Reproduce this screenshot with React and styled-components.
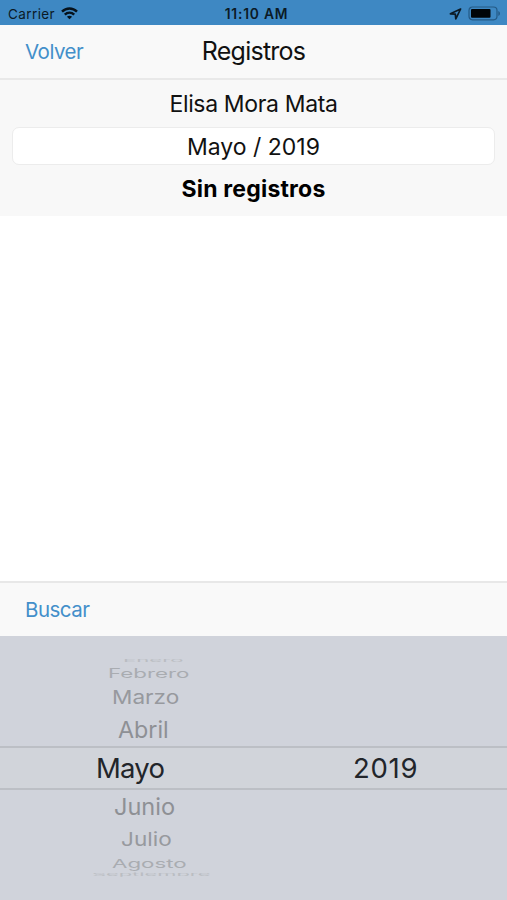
import React from 'react';
import styled, {createGlobalStyle} from 'styled-components';

const GlobalStyle = createGlobalStyle`
    * {
        box-sizing: border-box;
    }
    body {
        margin: 0;
        background-color: #fff;
        font-family: Inter, "Liberation Sans", sans-serif;
    }
`;

const Screen = styled.div`
    display: flex;
    flex-direction: column;
    width: 507px;
    height: 900px;
    overflow: hidden;
    color: #111;
`;

const StatusBar = styled.header`
    display: grid;
    grid-template-columns: 1fr auto 1fr;
    align-items: center;
    height: 25px;
    padding: 2px 6px 0 8px;
    background-color: #3e88c3;
    color: #0b1a26;
    font-size: 13.5px;
    letter-spacing: 0.4px;
`;

const StatusSide = styled.div`
    display: flex;
    align-items: center;
    justify-content: ${({$end}) => $end ? 'flex-end' : 'flex-start'};
    gap: 6px;
`;

const Clock = styled.span`
    font-weight: 600;
    font-size: 13.8px;
    letter-spacing: 0.8px;
    padding-left: 4px;
`;

const NavBar = styled.nav`
    display: grid;
    grid-template-columns: 1fr auto 1fr;
    align-items: center;
    height: 55px;
    padding: 0 25px;
    background-color: #f9f9f9;
    border-bottom: 2px solid #e9e9e9;
`;

const Title = styled.h1`
    margin: 0;
    padding-bottom: 2px;
    font-size: 25px;
    line-height: 30px;
    font-weight: 400;
    letter-spacing: -0.75px;
`;

const LinkButton = styled.button`
    justify-self: start;
    padding: 0;
    border: 0;
    background: none;
    color: #438fca;
    font-family: inherit;
    font-size: 20.5px;
    line-height: 24px;
    letter-spacing: -0.5px;
`;

const Summary = styled.section`
    display: flex;
    flex-direction: column;
    height: 136px;
    padding: 9px 12px 0;
    background-color: #f8f8f8;
    text-align: center;
    font-size: 23px;
`;

const PersonName = styled.div`
    height: 38px;
    line-height: 30px;
    letter-spacing: -0.35px;
`;

const MonthField = styled.div`
    height: 38px;
    line-height: 38px;
    background-color: #fff;
    border: 1px solid #ececec;
    border-radius: 7px;
`;

const EmptyMessage = styled.div`
    padding-top: 9px;
    line-height: 30px;
    font-weight: 700;
    letter-spacing: 0.2px;
    color: #000;
`;

const List = styled.main`
    flex: 1;
    background-color: #fff;
`;

const Toolbar = styled.div`
    display: flex;
    align-items: center;
    height: 55px;
    padding: 0 25px;
    background-color: #f9f9f9;
    border-top: 2px solid #e8e8e8;
`;

const Picker = styled.div`
    height: 264px;
    padding-top: 19px;
    background-color: #d0d3db;
`;

const PickerRow = styled.div`
    display: grid;
    grid-template-columns: 354px 1fr;
    align-items: center;
    height: ${({$height}) => $height}px;
    padding-left: ${({$left}) => $left}px;
    color: ${({$color}) => $color};
`;

const SelectedRow = styled(PickerRow)`
    grid-template-columns: 257px 1fr;
    background-color: #d1d4da;
    border-top: 2px solid #bcbfc5;
    border-bottom: 2px solid #bcbfc5;
    font-size: 27.5px;
    line-height: 40px;
`;

const SelectedValue = styled.span`
    letter-spacing: ${({$spacing}) => $spacing}px;
`;

// the rows far from the centre lean back, like on a wheel
const Leaning = styled.span`
    justify-self: start;
    font-size: 24px;
    line-height: 0;
    transform: scale(${({$x}) => $x}, ${({$y}) => $y});
    transform-origin: left center;
`;

const monthsBefore = [
    {name: 'Enero', height: 11, left: 123, x: 0.92, y: 0.17, color: '#babdc2'},
    {name: 'Febrero', height: 16, left: 108, x: 0.93, y: 0.52, color: '#a9acb1'},
    {name: 'Marzo', height: 32, left: 112, x: 0.94, y: 0.79, color: '#97999e'},
    {name: 'Abril', height: 32, left: 118, x: 0.97, y: 0.97, color: '#8e9095'}
];

const monthsAfter = [
    {name: 'Junio', height: 33, left: 114, x: 0.98, y: 0.95, color: '#8e9095'},
    {name: 'Julio', height: 34, left: 121, x: 0.94, y: 0.77, color: '#97999e'},
    {name: 'Agosto', height: 13, left: 112, x: 0.93, y: 0.5, color: '#a9acb1'},
    {name: 'Septiembre', height: 9, left: 92, x: 0.91, y: 0.17, color: '#babdc2'}
];

const WifiIcon = () => (
    <svg width="17" height="13" viewBox="0 0 17 13" fill="none" stroke="#06121c" strokeWidth="2.4">
        <path d="M1 4.7C5.2.4 11.8.4 16 4.7" />
        <path d="M3.8 7.6c2.7-2.7 6.7-2.7 9.4 0" />
        <path d="M8.5 12.3 5.9 9.7c1.5-1.4 3.7-1.4 5.2 0z" fill="#06121c" stroke="none" />
    </svg>
);

const LocationIcon = () => (
    <svg width="13" height="12" viewBox="0 0 13 12" fill="none" stroke="#0b1a26" strokeWidth="1.7" strokeLinejoin="round">
        <path d="M11.6 1 1.4 5.8l4.9.4.5 4.6z" />
    </svg>
);

const BatteryIcon = () => (
    <svg width="33" height="15" viewBox="0 0 33 15">
        <rect x="1" y="1" width="28" height="12.8" rx="3.5" fill="none" stroke="#245a86" strokeWidth="1.2" />
        <rect x="3" y="3" width="19.5" height="8.8" rx="1" fill="#000508" />
        <path d="M30.3 5v5c2.2-.8 2.2-4.2 0-5z" fill="#245a86" />
    </svg>
);

const Month = ({month}) => {
    const {name, height, left, x, y, color} = month;
    return (
        <PickerRow $height={height} $left={left} $color={color}>
            <Leaning $x={x} $y={y}>{name}</Leaning>
        </PickerRow>
    )
}

export default function App() {
    return (
        <Screen>
            <GlobalStyle />
            <StatusBar>
                <StatusSide>
                    <span>Carrier</span>
                    <WifiIcon />
                </StatusSide>
                <Clock>11:10 AM</Clock>
                <StatusSide $end>
                    <LocationIcon />
                    <BatteryIcon />
                </StatusSide>
            </StatusBar>
            <NavBar>
                <LinkButton>Volver</LinkButton>
                <Title>Registros</Title>
            </NavBar>
            <Summary>
                <PersonName>Elisa Mora Mata</PersonName>
                <MonthField>Mayo / 2019</MonthField>
                <EmptyMessage>Sin registros</EmptyMessage>
            </Summary>
            <List />
            <Toolbar>
                <LinkButton>Buscar</LinkButton>
            </Toolbar>
            <Picker>
                {monthsBefore.map((month) => <Month key={month.name} month={month} />)}
                <SelectedRow $height={44} $left={96} $color="#22252a">
                    <SelectedValue $spacing={-0.8}>Mayo</SelectedValue>
                    <SelectedValue $spacing={0.7}>2019</SelectedValue>
                </SelectedRow>
                {monthsAfter.map((month) => <Month key={month.name} month={month} />)}
            </Picker>
        </Screen>
    )
}
